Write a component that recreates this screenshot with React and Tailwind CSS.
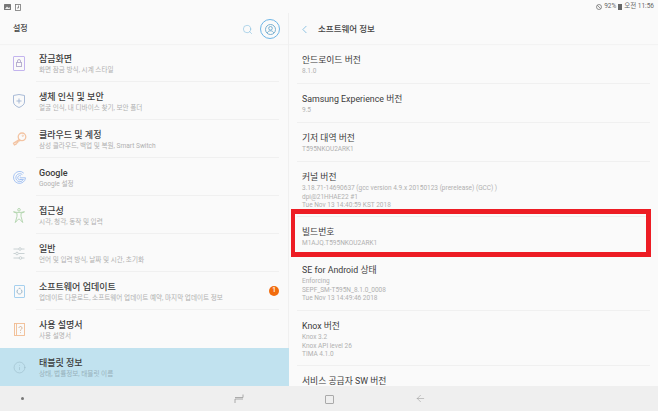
import React from 'react';
import { Search, ChevronLeft, Info, ArrowLeft } from 'lucide-react';

const LockIcon = () => (
  <svg width="12" height="15" viewBox="0 0 12 15" fill="none" stroke="#c3b4ee" strokeWidth="1">
    <rect x="0.500" y="0.500" width="11" height="14" rx="0.500" />
    <rect x="3.500" y="6.500" width="5" height="4" stroke="#b8b0d0" />
    <path d="M4.500 6.500V5a1.500 1.500 0 0 1 3 0v1.500" stroke="#b8b0d0" />
  </svg>
);

const ShieldIcon = () => (
  <svg width="12" height="14" viewBox="0 0 12 14" fill="none" stroke="#9fb3d2" strokeWidth="0.9">
    <path d="M0.500 1.500 6 0.500l5.500 1V8c0 2.500-2.500 4.300-5.500 5.500C3 12.300 0.500 10.500 0.500 8z" />
    <path d="M6 4.500v5M3.500 7h5" />
  </svg>
);

const KeyIcon = () => (
  <svg width="15" height="14" viewBox="0 0 15 14" fill="none" stroke="#f3c4a3" strokeWidth="1.300">
    <circle cx="10" cy="4.800" r="3.800" />
    <circle cx="10.800" cy="3.800" r="0.700" strokeWidth="0.800" />
    <path d="M7.300 7.500 1.500 11.300l.9 1.700 1.800-.9.100-1.300 1.300-.2.200-1.200 2.800-1" />
  </svg>
);

const GoogleIcon = () => (
  <svg width="13" height="13" viewBox="0 0 13 13" fill="none" stroke="#9cbdf2" strokeWidth="0.900">
    <path d="M10.800 2.200A6 6 0 1 0 12.500 6.800H6.700" />
    <path d="M9.400 3.600A4 4 0 1 0 10.400 8.500H6.700" />
    <path d="M8 5A2.100 2.100 0 1 0 8.200 8.300" />
  </svg>
);

const AccessIcon = () => (
  <svg width="12" height="15" viewBox="0 0 12 15" fill="none" stroke="#aed3a9" strokeWidth="0.900">
    <circle cx="6" cy="1.800" r="1.300" />
    <path d="M0.500 3.800 4 5.300v3L2.300 14.500l3-3.300h1.400l3 3.300L8 8.300v-3l3.500-1.500-3.500.6H4z" />
  </svg>
);

const SlidersIcon = () => (
  <svg width="12" height="13" viewBox="0 0 12 13" fill="none" stroke="#c4cdcf" strokeWidth="0.900">
    <path d="M0.500 2h5M8.500 2h3M0.500 6.500h2M5.500 6.500h6M0.500 11h5.500M9 11h2.500" />
    <circle cx="7" cy="2" r="1.300" />
    <circle cx="4" cy="6.500" r="1.300" />
    <circle cx="7.500" cy="11" r="1.300" />
  </svg>
);

const UpdateIcon = () => (
  <svg width="11" height="13" viewBox="0 0 11 13" fill="none" stroke="#a6d0ee" strokeWidth="1">
    <rect x="0.500" y="0.500" width="10" height="12" rx="0.500" />
    <path d="M4.300 4.300a2.500 2.500 0 1 0 2.400 0M4.800 3.300h1.600" stroke="#9db6c8" />
  </svg>
);

const ManualIcon = () => (
  <svg width="11" height="13" viewBox="0 0 11 13" fill="none" stroke="#f1bc92" strokeWidth="0.900">
    <rect x="0.500" y="0.500" width="10" height="12" />
    <path d="M2.500 0.500v12" />
    <path d="M5 5a1.500 1.500 0 1 1 2.400 1.200c-.6.400-.9.800-.9 1.500M6.500 9.300v.8" stroke="#d3a987" />
  </svg>
);

const menu = [
  { title: '잠금화면', sub: '화면 잠금 방식, 시계 스타일', icon: <LockIcon /> },
  { title: '생체 인식 및 보안', sub: '얼굴 인식, 내 디바이스 찾기, 보안 폴더', icon: <ShieldIcon /> },
  { title: '클라우드 및 계정', sub: '삼성 클라우드, 백업 및 복원, Smart Switch', icon: <KeyIcon /> },
  { title: 'Google', sub: 'Google 설정', icon: <GoogleIcon /> },
  { title: '접근성', sub: '시각, 청각, 동작 및 입력', icon: <AccessIcon /> },
  { title: '일반', sub: '언어 및 입력 방식, 날짜 및 시간, 초기화', icon: <SlidersIcon /> },
  { title: '소프트웨어 업데이트', sub: '업데이트 다운로드, 소프트웨어 업데이트 예약, 마지막 업데이트 정보', icon: <UpdateIcon />, badge: 1 },
  { title: '사용 설명서', sub: '사용 설명서', icon: <ManualIcon /> },
  { title: '태블릿 정보', sub: '상태, 법률정보, 태블릿 이름', icon: <Info size={13} strokeWidth={1} color="#98b9c6" />, active: true },
];

const info = [
  { title: '안드로이드 버전', lines: ['8.1.0'], h: 'h-[39px]' },
  { title: 'Samsung Experience 버전', lines: ['9.5'], h: 'h-[39px]' },
  { title: '기저 대역 버전', lines: ['T595NKOU2ARK1'], h: 'h-[39px]' },
  { title: '커널 버전', lines: ['3.18.71-14690637 (gcc version 4.9.x 20150123 (prerelease) (GCC) )', 'dpi@21HHAE22 #1', 'Tue Nov 13 14:40:59 KST 2018'], h: 'h-[55px]' },
  { title: '빌드번호', lines: ['M1AJQ.T595NKOU2ARK1'], h: 'h-[38px]' },
  { title: 'SE for Android 상태', lines: ['Enforcing', 'SEPF_SM-T595N_8.1.0_0008', 'Tue Nov 13 14:49:46 2018'], h: 'h-[56px]' },
  { title: 'Knox 버전', lines: ['Knox 3.2', 'Knox API level 26', 'TIMA 4.1.0'], h: 'h-[55px]' },
  { title: '서비스 공급자 SW 버전', lines: [], h: 'h-[38px]' },
];

export default function App() {
  return (
    <div className="relative flex h-[411px] w-[658px] flex-col overflow-hidden bg-[#fafafa] font-['Roboto','Noto_Sans_CJK_KR',sans-serif]">
      {/* 상태바 */}
      <div className="flex h-[13px] shrink-0 items-center justify-between pl-1 pr-1 pt-px text-[6.500px] text-[#666]">
        <div className="flex items-center gap-[4px]">
          <svg width="7" height="6" viewBox="0 0 7 6"><rect width="7" height="6" rx="0.500" fill="#777" /><path d="M1 5l2-2.500L4.500 4 5.500 3 6 5z" fill="#eee" /></svg>
          <svg width="6" height="7" viewBox="0 0 6 7" fill="none" stroke="#777" strokeWidth="0.800"><rect x="0.500" y="0.500" width="5" height="6" /><path d="M3.500 1.500v2.500H2" /></svg>
        </div>
        <div className="flex items-center gap-[2px]">
          <svg width="6" height="6" viewBox="0 0 6 6" fill="none" stroke="#666" strokeWidth="0.700"><circle cx="3" cy="3" r="2.500" /><path d="M1.300 1.300l3.400 3.400" /></svg>
          <span>92%</span>
          <span className="h-[6px] w-[4px] bg-[#666]" />
          <span>오전 11:56</span>
        </div>
      </div>

      <div className="flex min-h-0 flex-1">
        {/* 왼쪽 메뉴 */}
        <div className="flex w-[289px] shrink-0 flex-col border-r border-[#f0f0f0]">
          <div className="flex h-[31px] shrink-0 items-center justify-between pl-[13px] pr-[8px] pt-px shadow-[0_1px_1px_#f3f3f3]">
            <span className="text-[8px] font-medium text-[#444]">설정</span>
            <div className="flex items-center gap-[7px]">
              <Search size={11} strokeWidth={1.100} color="#6db3dc" />
              <div className="flex h-[20px] w-[20px] items-center justify-center rounded-full border border-[#6db5e6]">
                <svg width="11" height="11" viewBox="0 0 11 11" fill="none" stroke="#6ba8cc" strokeWidth="0.900">
                  <circle cx="5.500" cy="5.500" r="5" />
                  <circle cx="5.500" cy="4.300" r="1.800" />
                  <path d="M2.300 8.800c.6-1.300 1.800-2 3.200-2s2.600.7 3.200 2" />
                </svg>
              </div>
            </div>
          </div>
          <div className="flex flex-col">
            {menu.map((item, i) => (
              <div key={item.title} className={`relative flex h-[38px] shrink-0 items-center ${item.active ? '-mr-px bg-[#c1e2ef]' : ''}`}>
                <div className="flex w-[39px] shrink-0 justify-center pr-px">{item.icon}</div>
                <div className="min-w-0 flex-1 pt-[2px]">
                  <div className="text-[9px] font-medium leading-[12px] text-[#3c3c3c]">{item.title}</div>
                  <div className={`text-[6.600px] leading-[10px] ${item.active ? 'text-[#97b1bb]' : 'text-[#b0b0b0]'}`}>{item.sub}</div>
                </div>
                {item.badge && (
                  <div className="mr-[9px] flex h-[10px] w-[10px] items-center justify-center rounded-full bg-[#f26c0d] text-[6.500px] font-medium text-white">{item.badge}</div>
                )}
                {i < menu.length - 2 && <div className="absolute bottom-0 left-[36px] right-[9px] h-px bg-[#f0f0f0]" />}
              </div>
            ))}
          </div>
        </div>

        {/* 오른쪽 상세 */}
        <div className="flex min-w-0 flex-1 flex-col">
          <div className="flex h-[31px] shrink-0 items-center pl-[9px] pt-px shadow-[0_1px_1px_#f3f3f3]">
            <ChevronLeft size={13} strokeWidth={1.400} color="#6db3dc" />
            <span className="ml-[7px] text-[8.500px] font-medium text-[#444]">소프트웨어 정보</span>
          </div>
          <div className="flex flex-col px-[8px] pt-px">
            {info.map((row) => (
              <div key={row.title} className={`${row.h} shrink-0 border-b border-[#f0f0f0] pl-[5px] pt-[9px]`}>
                <div className="text-[8.800px] leading-[13px] text-[#3c3c3c]">{row.title}</div>
                {row.lines.map((line) => (
                  <div key={line} className="text-[6.500px] leading-[8.500px] text-[#b0b0b0]">{line}</div>
                ))}
              </div>
            ))}
          </div>
        </div>
      </div>

      {/* 하단 내비게이션 */}
      <div className="absolute bottom-0 left-0 right-0 h-[25px] bg-[#efefef]">
        <span className="absolute left-[21px] top-[11px] h-[3px] w-[3px] rounded-full bg-[#777]" />
        <svg className="absolute left-[234px] top-[8px]" width="10" height="10" viewBox="0 0 10 10" fill="none" stroke="#999" strokeWidth="0.800"><path d="M1 3.500h8V0.500" /><path d="M9 5H1v4" /></svg>
        <span className="absolute left-[325px] top-[9px] h-[9px] w-[9px] rounded-[1px] border border-[#aaa]" />
        <ArrowLeft className="absolute left-[415px] top-[7px]" size={11} strokeWidth={1} color="#888" />
      </div>

      {/* 빨간 강조 상자 */}
      <div className="absolute left-[291px] top-[209px] h-[48px] w-[360px] border-[5px] border-l-4 border-[#ed1c24]" />
    </div>
  );
}
